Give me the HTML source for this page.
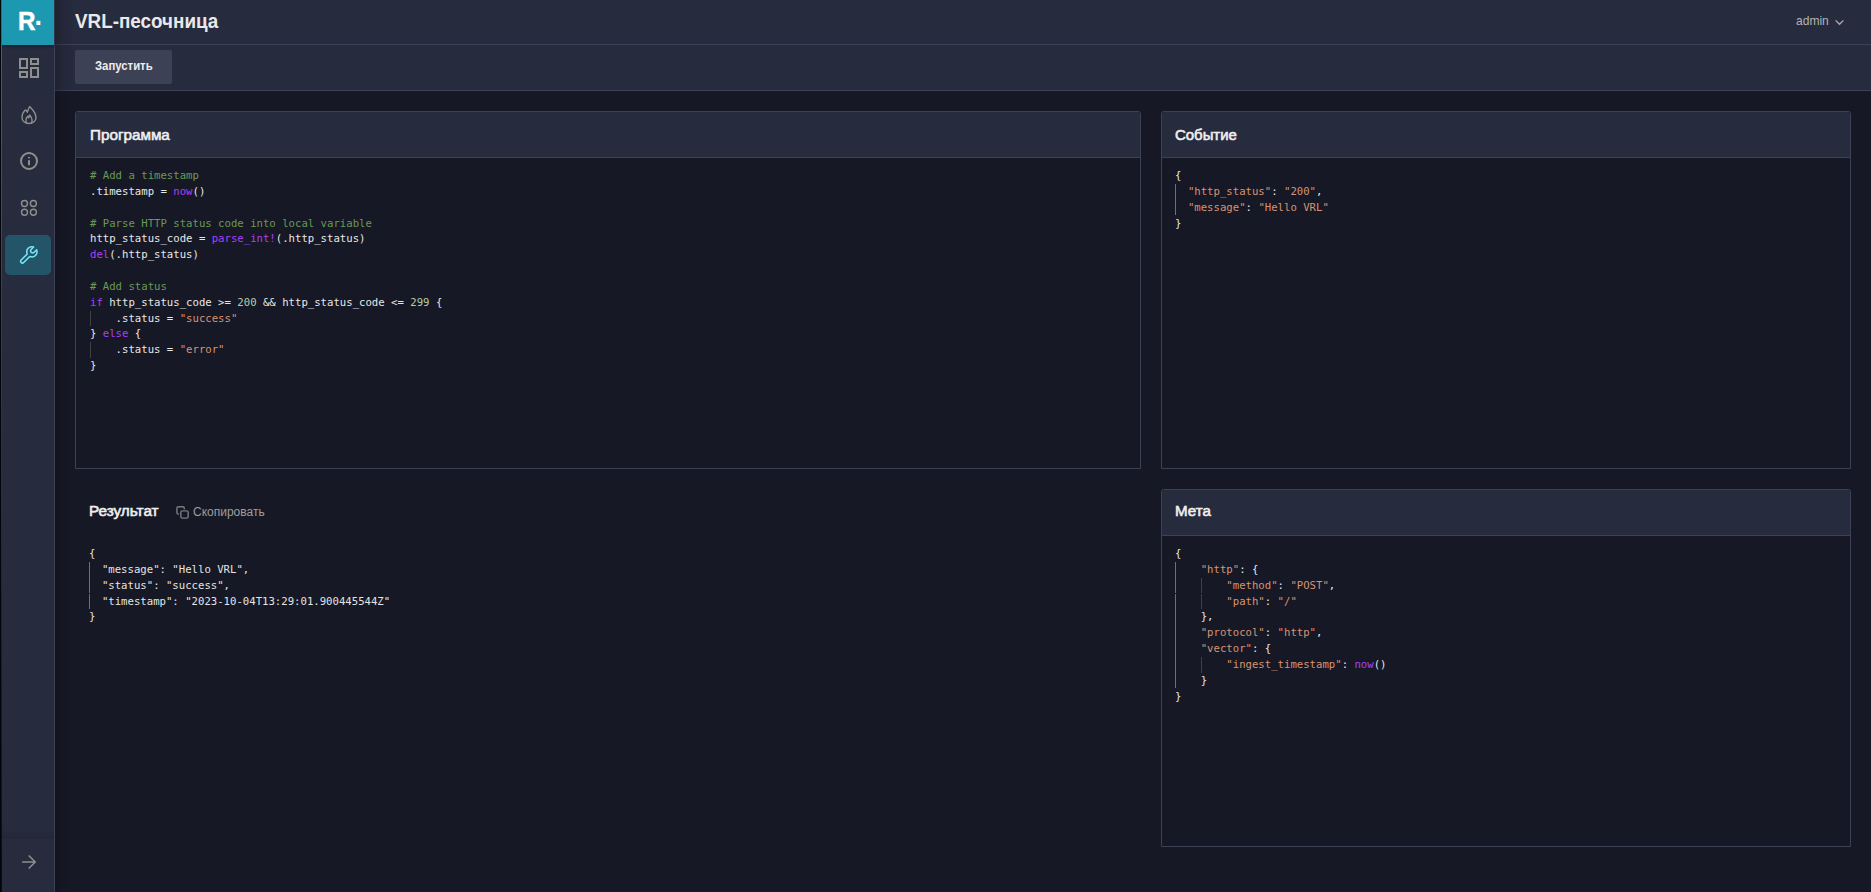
<!DOCTYPE html>
<html lang="ru">
<head>
<meta charset="utf-8">
<title>VRL-песочница</title>
<style>
*{box-sizing:border-box;margin:0;padding:0}
html,body{width:1871px;height:892px;overflow:hidden;background:#161825}
body{position:relative;font-family:"Liberation Sans",sans-serif;color:#e6e6e6;-webkit-font-smoothing:antialiased}
.abs{position:absolute}
#edge0{left:0;top:0;width:1px;height:892px;background:#02050a}
#edge1{left:1px;top:0;width:1px;height:892px;background:linear-gradient(to bottom,#e51d4a 0%,#80122d 45%,#3a0c1a 78%,#14080e 100%)}
#side{left:2px;top:0;width:53px;height:892px;background:#272b3e;border-right:1px solid #3d4156}
#sideshadow{left:55px;top:0;width:20px;height:892px;background:linear-gradient(to right,rgba(8,9,16,.3),rgba(8,9,16,.12) 35%,rgba(8,9,16,0));pointer-events:none}
#logo{left:2px;top:0;width:52px;height:45px;background:#1c98b0;box-shadow:0 1px 3px rgba(10,6,16,.45)}
#sep{left:2px;top:829px;width:52px;height:10px;background:linear-gradient(to bottom,rgba(10,10,20,0),rgba(10,10,20,.13))}
#head{left:55px;top:0;width:1816px;height:45px;background:#272b3e;border-bottom:1px solid #3d4156}
#tool{left:55px;top:45px;width:1816px;height:46px;background:#272b3e;border-bottom:1px solid #3d4156}
#title{left:75.3px;top:8.5px;font-size:19.4px;font-weight:700;line-height:24px;color:#e9e9e9;white-space:nowrap;transform-origin:left center;transform:scaleX(.972)}
#user{left:1796px;top:12.6px;font-size:13px;line-height:16px;color:#b5b4b1;white-space:nowrap;transform-origin:left center;transform:scaleX(.925)}
#run{left:75px;top:50px;width:97px;height:34px;border-radius:2px;background:#3d4155}
#runt{left:95px;top:57.7px;color:#ececec;font-size:12.6px;font-weight:700;line-height:16px;white-space:nowrap;transform-origin:left center;transform:scaleX(.9)}
.act{left:5px;top:235px;width:46px;height:40px;border-radius:5px;background:#235468}
.panel{border:1px solid #3d4156;border-radius:2.5px 2.5px 0 0;background:#161825}
.ph{left:0;top:0;right:0;height:46px;background:#272b3e;border-bottom:1px solid #3d4156;border-radius:2px 2px 0 0}
.pt{font-size:15.5px;font-weight:400;-webkit-text-stroke:.62px #efefef;line-height:20px;color:#efefef;white-space:nowrap;transform-origin:left center;transform:scaleX(1)}
.code{font-family:"DejaVu Sans Mono","Liberation Mono",monospace;font-size:10.657px;line-height:15.833px;color:#e8e8e8}
.code div{height:15.833px;white-space:pre}
.c{color:#6a9955}.f{color:#a840f8}.k{color:#a840f8}.n{color:#b5cea8}.s{color:#d69474}
.g{position:absolute;width:1px;background:#404252}
svg{position:absolute;overflow:visible}
#logoR{left:17.6px;top:6px;font-size:26px;line-height:30px;font-weight:700;color:#fff;transform-origin:left center;transform:scaleX(.93);-webkit-text-stroke:.5px #fff}
#logoD{left:34.5px;top:1px;font-size:27px;line-height:30px;font-weight:700;color:#fff}
</style>
</head>
<body>
<div id="side" class="abs"></div>
<div id="logo" class="abs"></div>
<div id="sep" class="abs"></div>
<div id="head" class="abs"></div>
<div id="tool" class="abs"></div>
<div id="sideshadow" class="abs"></div>
<div id="title" class="abs">VRL-песочница</div>
<div id="user" class="abs">admin</div>
<div id="run" class="abs"></div><div id="runt" class="abs">Запустить</div>
<div class="abs act"></div>

<svg class="abs" style="left:0;top:0" width="60" height="892" viewBox="0 0 60 892" fill="none" stroke="#8f8f8d" stroke-linejoin="round">
  <g stroke-width="2" stroke-linejoin="miter">
    <rect x="20" y="59" width="7" height="9"/>
    <rect x="31" y="59" width="7" height="5"/>
    <rect x="20" y="72" width="7" height="5"/>
    <rect x="31" y="68" width="7" height="9"/>
  </g>
  <g stroke-width="1.4">
    <path d="M29.7 106.5C32 109 36 112.5 36 117.5C36 121 33 123.5 29 123.5C25 123.5 22 121 22 117.5C22 114.5 23.3 111.8 25 110.2C25.8 109.5 26.3 110.3 27.3 112.3C28 110 28.8 108 29.7 106.5Z"/>
    <path d="M31 123.3C31.6 122.8 32.1 121.8 32.1 120.3C32.1 118.3 31 116.5 29.7 115C29.3 115.8 29 116.8 28.8 117.8L27.8 116.2C26.7 117.3 25.9 118.7 25.9 120.3C25.9 121.8 26.4 122.8 27 123.3"/>
  </g>
  <circle cx="29" cy="161" r="8" stroke-width="2"/>
  <rect x="28" y="157" width="2" height="1.3" fill="#8f8f8d" stroke="none"/>
  <rect x="28" y="160.2" width="2" height="5" fill="#8f8f8d" stroke="none"/>
  <g stroke-width="1.4">
    <circle cx="24.5" cy="203.5" r="3"/><circle cx="33.4" cy="203.5" r="3"/>
    <circle cx="24.5" cy="212.3" r="3"/><circle cx="33.4" cy="212.3" r="3"/>
  </g>
  <path stroke="#78e8fc" stroke-width="1.5" d="M33.66 247.01A5.1 5.1 0 0 0 27.28 253.95L21.16 260.06A1.75 1.75 0 0 0 23.64 262.54L29.75 256.42A5.1 5.1 0 0 0 36.57 249.76L33.91 252.41A2.0 2.0 0 0 1 31.09 249.59Z"/>
  <path stroke-width="1.5" stroke-linejoin="miter" d="M22.1 862H35M28.7 855.5L35.2 862L28.7 868.5"/>
</svg>
<svg class="abs" style="left:1830px;top:14px" width="20" height="16" viewBox="1830 14 20 16" fill="none" stroke="#aeadab" stroke-width="1.3"><path d="M1835.6 20.4L1839.5 24.3L1843.4 20.4"/></svg>
<svg class="abs" style="left:172px;top:502px" width="20" height="20" viewBox="172 502 20 20" fill="none" stroke="#7a7b82" stroke-width="1.4"><path d="M184.3 509.2V508.3a1.5 1.5 0 0 0 -1.5 -1.5H178.4a1.5 1.5 0 0 0 -1.5 1.5V512.6a1.5 1.5 0 0 0 1.5 1.5H179"/><rect x="180.8" y="510.85" width="7.4" height="7.3" rx="1.7"/></svg>
<div class="abs" id="logoR">R</div><div class="abs" id="logoD">.</div>

<!-- Program panel -->
<div class="abs panel" style="left:75px;top:111px;width:1066px;height:358px">
  <div class="abs ph"></div>
  <div class="abs pt" style="left:14.3px;top:12.8px;transform:scaleX(.983)">Программа</div>
  <div class="abs code" style="left:14px;top:56.1px">
<div><span class="c"># Add a timestamp</span></div>
<div>.timestamp = <span class="f">now</span>()</div>
<div></div>
<div><span class="c"># Parse HTTP status code into local variable</span></div>
<div>http_status_code = <span class="f">parse_int!</span>(.http_status)</div>
<div><span class="f">del</span>(.http_status)</div>
<div></div>
<div><span class="c"># Add status</span></div>
<div><span class="k">if</span> http_status_code &gt;= <span class="n">200</span> &amp;&amp; http_status_code &lt;= <span class="n">299</span> {</div>
<div>    .status = <span class="s">"success"</span></div>
<div>} <span class="k">else</span> {</div>
<div>    .status = <span class="s">"error"</span></div>
<div>}</div>
  </div>
</div>

<!-- Event panel -->
<div class="abs panel" style="left:1161px;top:111px;width:690px;height:358px">
  <div class="abs ph"></div>
  <div class="abs pt" style="left:13.3px;top:12.8px;transform:scaleX(.963)">Событие</div>
  <div class="abs code" style="left:13.1px;top:56.1px">
<div>{</div>
<div>  <span class="s">"http_status"</span>: <span class="s">"200"</span>,</div>
<div>  <span class="s">"message"</span>: <span class="s">"Hello VRL"</span></div>
<div>}</div>
  </div>
</div>

<!-- Result -->
<div class="abs pt" style="left:89.3px;top:500.6px;transform:scaleX(.987)">Результат</div>
<div class="abs" style="left:193px;top:504px;font-size:12px;line-height:16px;color:#9f9e9a;white-space:nowrap">Скопировать</div>
<div class="abs code" style="left:89.1px;top:546.1px;color:#e4e4e4">
<div>{</div>
<div>  "message": "Hello VRL",</div>
<div>  "status": "success",</div>
<div>  "timestamp": "2023-10-04T13:29:01.900445544Z"</div>
<div>}</div>
</div>

<!-- Meta panel -->
<div class="abs panel" style="left:1161px;top:489px;width:690px;height:358px">
  <div class="abs ph"></div>
  <div class="abs pt" style="left:13.3px;top:11.1px;transform:scaleX(.978)">Мета</div>
  <div class="abs code" style="left:13.1px;top:56.1px">
<div>{</div>
<div>    <span class="s">"http"</span>: {</div>
<div>        <span class="s">"method"</span>: <span class="s">"POST"</span>,</div>
<div>        <span class="s">"path"</span>: <span class="s">"/"</span></div>
<div>    },</div>
<div>    <span class="s">"protocol"</span>: <span class="s">"http"</span>,</div>
<div>    <span class="s">"vector"</span>: {</div>
<div>        <span class="s">"ingest_timestamp"</span>: <span class="f">now</span>()</div>
<div>    }</div>
<div>}</div>
  </div>
</div>

<!-- indent guides -->
<div class="g" style="left:90px;top:310.50px;height:15.83px;background:#404040"></div>
<div class="g" style="left:90px;top:342.16px;height:15.83px;background:#404040"></div>
<div class="g" style="left:1175px;top:183.83px;height:15.83px;background:#707070"></div>
<div class="g" style="left:1175px;top:199.67px;height:15.83px;background:#707070"></div>
<div class="g" style="left:89px;top:561.83px;height:15.83px;background:#707070"></div>
<div class="g" style="left:89px;top:577.67px;height:15.83px;background:#707070"></div>
<div class="g" style="left:89px;top:593.50px;height:15.83px;background:#707070"></div>
<div class="g" style="left:1175px;top:561.83px;height:15.83px;background:#707070"></div>
<div class="g" style="left:1175px;top:577.67px;height:15.83px;background:#707070"></div>
<div class="g" style="left:1175px;top:593.50px;height:15.83px;background:#707070"></div>
<div class="g" style="left:1175px;top:609.33px;height:15.83px;background:#707070"></div>
<div class="g" style="left:1175px;top:625.16px;height:15.83px;background:#707070"></div>
<div class="g" style="left:1175px;top:641.00px;height:15.83px;background:#707070"></div>
<div class="g" style="left:1175px;top:656.83px;height:15.83px;background:#707070"></div>
<div class="g" style="left:1175px;top:672.66px;height:15.83px;background:#707070"></div>
<div class="g" style="left:1201px;top:577.67px;height:15.83px;background:#404040"></div>
<div class="g" style="left:1201px;top:593.50px;height:15.83px;background:#404040"></div>
<div class="g" style="left:1201px;top:656.83px;height:15.83px;background:#404040"></div>
<div id="edge0" class="abs"></div>
<div id="edge1" class="abs"></div>
</body>
</html>
